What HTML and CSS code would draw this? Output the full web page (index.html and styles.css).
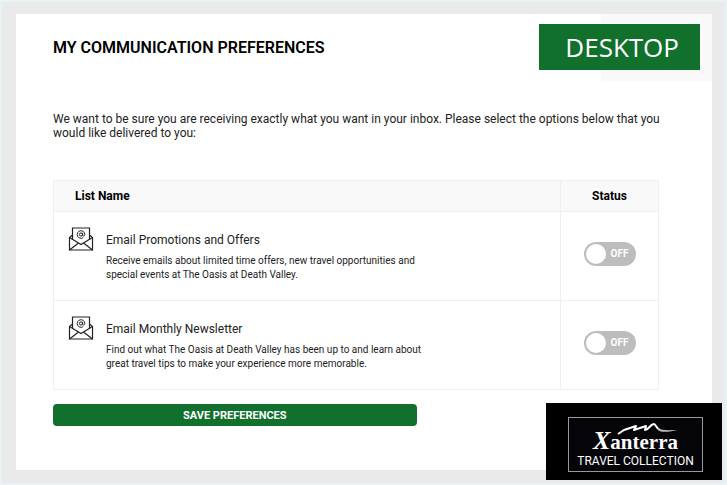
FILE: index.html
```
<!DOCTYPE html>
<html lang="en">
<head>
  <meta charset="UTF-8" />
  <meta name="viewport" content="width=device-width, initial-scale=1.0" />
  <title>My Communication Preferences</title>
  <link rel="stylesheet" href="styles.css">
</head>
<body>
  <!-- Envelope icon shared by the list rows -->
  <svg class="sprite" aria-hidden="true">
    <symbol id="icon-envelope" viewBox="0 0 26 24">
      <g fill="none" stroke="#222" stroke-width="1.2">
        <path d="M4.500 12.500V1h17v11.500" />
        <path d="M4.500 8 1.500 10.500V23h23V10.500L21.500 8" />
        <path d="M1.500 10.500 13 17.500 24.500 10.500M1.500 23 10.500 16M24.500 23 15.500 16" />
        <circle cx="13" cy="7.500" r="1.600" stroke-width="1" />
        <path d="M14.600 5.900v2.300c0 1.400 2.200 1.200 2.200-.800a3.800 3.800 0 1 0-1.700 3.300" stroke-width="1" />
      </g>
    </symbol>
  </svg>

  <div class="frame">
    <main class="panel">
      <div class="corner"></div>
      <div class="badge">DESKTOP</div>

      <h1>MY COMMUNICATION PREFERENCES</h1>
      <p class="intro">We want to be sure you are receiving exactly what you want in your inbox. Please select the options below that you would like delivered to you:</p>

      <form>
        <table class="list">
          <thead>
            <tr>
              <th class="col-name">List Name</th>
              <th class="col-status">Status</th>
            </tr>
          </thead>
          <tbody>
            <tr>
              <td>
                <div class="item">
                  <svg class="item-icon" aria-hidden="true"><use href="#icon-envelope" /></svg>
                  <div class="item-text">
                    <label class="item-title" for="promotions">Email Promotions and Offers</label>
                    <p class="item-desc">Receive emails about limited time offers, new travel opportunities and special events at The Oasis at Death Valley.</p>
                  </div>
                </div>
              </td>
              <td class="status">
                <label class="switch">
                  <input type="checkbox" id="promotions" />
                  <span>OFF</span>
                </label>
              </td>
            </tr>
            <tr>
              <td>
                <div class="item">
                  <svg class="item-icon" aria-hidden="true"><use href="#icon-envelope" /></svg>
                  <div class="item-text">
                    <label class="item-title" for="newsletter">Email Monthly Newsletter</label>
                    <p class="item-desc">Find out what The Oasis at Death Valley has been up to and learn about great travel tips to make your experience more memorable.</p>
                  </div>
                </div>
              </td>
              <td class="status">
                <label class="switch">
                  <input type="checkbox" id="newsletter" />
                  <span>OFF</span>
                </label>
              </td>
            </tr>
          </tbody>
        </table>
        <button type="submit" class="save-btn">SAVE PREFERENCES</button>
      </form>
    </main>

    <!-- Brand logo -->
    <div class="brand">
      <div class="brand-box">
        <svg class="brand-peaks" viewBox="0 0 62 14" aria-hidden="true">
          <path d="M1 12 7 8 19 4l-2 4 12-4-1 4c4 0 5-6 9-6 2 0 2 5 6 6" fill="none" stroke="#fff" stroke-width="2" stroke-linejoin="round" />
          <path d="M40 6c6 3 12 2 21 2-7 1-12 3-19 1z" fill="#bbb" />
        </svg>
        <div class="brand-name"><span class="brand-initial">X</span>anterra</div>
        <div class="brand-sub">TRAVEL COLLECTION</div>
      </div>
    </div>
  </div>
</body>
</html>
```
FILE: styles.css
```
:root {
  --green: #11702b;
  --frame-color: #eaeaea;
  --line-color: #efefef;
  --head-color: #f9f9f9;
  --off-color: #bdbdbd;
}
* {
  box-sizing: border-box;
  margin: 0;
  padding: 0;
}
body {
  display: flex;
  min-height: 100vh;
  padding: 2px;
  background-color: #e9f3f6;
  color: #222;
  font-family: Roboto, sans-serif;
  font-size: 12px;
  line-height: 14px;
}
.sprite {
  position: absolute;
  width: 0;
  height: 0;
}
.frame {
  position: relative;
  flex: 1;
  display: flex;
  padding: 12px 13px 13px 14px;
  background-color: var(--frame-color);
}
.panel {
  position: relative;
  flex: 1;
  padding: 24px 53px 44px 37px;
  background-color: white;
}
.corner {
  position: absolute;
  top: 0;
  right: 0;
  width: 111px;
  height: 67px;
  background-color: var(--head-color);
}
.badge {
  position: absolute;
  top: 10px;
  right: 12px;
  padding: 0 21px 0 26px;
  background-color: var(--green);
  color: white;
  font-family: "Open Sans", sans-serif;
  font-size: 26px;
  line-height: 46px;
}
h1 {
  margin-bottom: 54px;
  color: #000;
  font-size: 16px;
  font-weight: 600;
  line-height: 20px;
}
.intro {
  margin-right: -16px;
  margin-bottom: 40px;
}
.list {
  width: 100%;
  border-collapse: collapse;
}
.list th,
.list td {
  border: 1px solid var(--line-color);
}
.list th {
  height: 31px;
  background-color: var(--head-color);
  color: #000;
  font-weight: 700;
}
.col-name {
  padding-left: 21px;
  text-align: left;
}
.col-status {
  width: 98px;
}
.item {
  display: flex;
  gap: 12px;
  min-height: 88px;
  padding: 15px 14px;
}
.item-icon {
  flex: none;
  width: 26px;
  height: 24px;
}
.item-text {
  max-width: 328px;
  padding-top: 6px;
}
.item-title {
  display: block;
  margin-bottom: 7px;
}
.item-desc {
  font-size: 10px;
}
.list .status {
  padding-bottom: 4px;
  text-align: center;
  vertical-align: middle;
}
.switch {
  display: inline-flex;
  align-items: center;
  gap: 5px;
  width: 52px;
  height: 24px;
  padding: 2px;
  border-radius: 12px;
  background-color: var(--off-color);
  color: white;
  font-size: 10px;
  font-weight: 700;
  cursor: pointer;
}
.switch input {
  appearance: none;
  width: 20px;
  height: 20px;
  border-radius: 50%;
  background-color: white;
  cursor: pointer;
}
.save-btn {
  display: block;
  width: 60%;
  height: 22px;
  margin-top: 14px;
  border: none;
  border-radius: 4px;
  background-color: var(--green);
  color: white;
  font-family: inherit;
  font-size: 11px;
  font-weight: 700;
  cursor: pointer;
}
/* Logo over the bottom corner */
.brand {
  position: absolute;
  right: 3px;
  bottom: 3px;
  padding: 14px 19px 8px 22px;
  background-color: #000;
}
.brand-box {
  position: relative;
  width: 135px;
  height: 55px;
  padding-top: 12px;
  border: 1px solid #999;
  background-color: #050509;
  color: white;
  text-align: center;
}
.brand-peaks {
  position: absolute;
  top: 4px;
  left: 48px;
  width: 62px;
  height: 14px;
}
.brand-name {
  font-family: "Liberation Serif", serif;
  font-size: 21px;
  font-weight: 700;
  line-height: 22px;
}
.brand-initial {
  font-size: 26px;
  font-style: italic;
}
.brand-sub {
  font-size: 12px;
  line-height: 16px;
}
```
